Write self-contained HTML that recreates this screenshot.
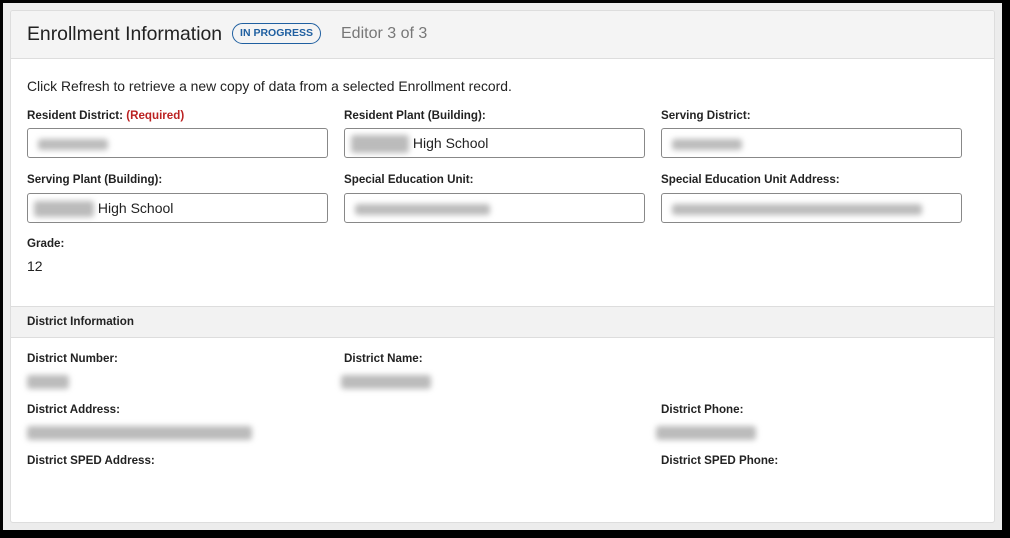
<!DOCTYPE html>
<html><head><style>
*{box-sizing:border-box;margin:0;padding:0}
body{width:1010px;height:538px;background:#000;font-family:"Liberation Sans",Arial,sans-serif;color:#222;position:relative;overflow:hidden}
.frame{position:absolute;left:3px;top:3px;width:999px;height:527px;background:#ececec}
.panel{position:absolute;left:10px;top:10px;width:985px;height:513px;background:#fff;border:1px solid #ddd;border-radius:3px;overflow:hidden}
.hdr{position:absolute;left:0;top:0;width:100%;height:48px;background:#f4f4f4;border-bottom:1px solid #ddd}
.abs{position:absolute;white-space:nowrap}
.title{left:16px;top:12px;font-size:19.4px;color:#222}
.badge{left:221px;top:12px;height:21px;width:89px;border:1.5px solid #1f5fa0;border-radius:11px;color:#1f5fa0;font-size:10.5px;font-weight:bold;text-align:center;line-height:18px}
.ed{left:330px;top:14px;font-size:16px;color:#777}
.lbl{font-size:11.6px;font-weight:bold;color:#222}
.req{color:#b22}
.inp{position:absolute;width:301px;height:30px;border:1px solid #888;border-radius:3px;background:#fff;font-size:14px;line-height:28px;padding-left:6px}
.bl{display:inline-block;background:#bbb;filter:blur(3px);height:11px;vertical-align:middle;border-radius:3px}
.sec{position:absolute;left:0;top:295px;width:100%;height:32px;background:#f2f2f2;border-top:1px solid #ddd;border-bottom:1px solid #ddd}
</style></head><body>
<div class="frame"></div>
<div class="panel">
<div class="hdr"></div>
<div class="abs title">Enrollment Information</div>
<div class="abs badge">IN PROGRESS</div>
<div class="abs ed">Editor 3 of 3</div>
<div class="abs" style="left:16px;top:67px;font-size:13.9px">Click Refresh to retrieve a new copy of data from a selected Enrollment record.</div>

<div class="abs lbl" style="left:16px;top:98px">Resident District: <span class="req">(Required)</span></div>
<div class="abs lbl" style="left:333px;top:98px">Resident Plant (Building):</div>
<div class="abs lbl" style="left:650px;top:98px">Serving District:</div>
<div class="inp" style="left:16px;top:117px"><span class="bl" style="width:70px;margin-left:4px"></span></div>
<div class="inp" style="left:333px;top:117px"><span class="bl" style="width:58px;height:18px"></span> High School</div>
<div class="inp" style="left:650px;top:117px"><span class="bl" style="width:70px;margin-left:4px"></span></div>

<div class="abs lbl" style="left:16px;top:162px">Serving Plant (Building):</div>
<div class="abs lbl" style="left:333px;top:162px">Special Education Unit:</div>
<div class="abs lbl" style="left:650px;top:162px">Special Education Unit Address:</div>
<div class="inp" style="left:16px;top:182px"><span class="bl" style="width:60px;height:16px"></span> High School</div>
<div class="inp" style="left:333px;top:182px"><span class="bl" style="width:135px;margin-left:4px"></span></div>
<div class="inp" style="left:650px;top:182px"><span class="bl" style="width:250px;margin-left:4px"></span></div>

<div class="abs lbl" style="left:16px;top:226px">Grade:</div>
<div class="abs" style="left:16px;top:247px;font-size:14px">12</div>

<div class="sec"><div class="abs lbl" style="left:16px;top:8px">District Information</div></div>

<div class="abs lbl" style="left:16px;top:341px">District Number:</div>
<div class="abs lbl" style="left:333px;top:341px">District Name:</div>
<div class="abs bl" style="left:16px;top:364px;width:42px;height:14px"></div>
<div class="abs bl" style="left:330px;top:364px;width:90px;height:14px"></div>

<div class="abs lbl" style="left:16px;top:392px">District Address:</div>
<div class="abs lbl" style="left:650px;top:392px">District Phone:</div>
<div class="abs bl" style="left:16px;top:415px;width:225px;height:14px"></div>
<div class="abs bl" style="left:645px;top:415px;width:100px;height:14px"></div>

<div class="abs lbl" style="left:16px;top:443px">District SPED Address:</div>
<div class="abs lbl" style="left:650px;top:443px">District SPED Phone:</div>
</div>
</body></html>
